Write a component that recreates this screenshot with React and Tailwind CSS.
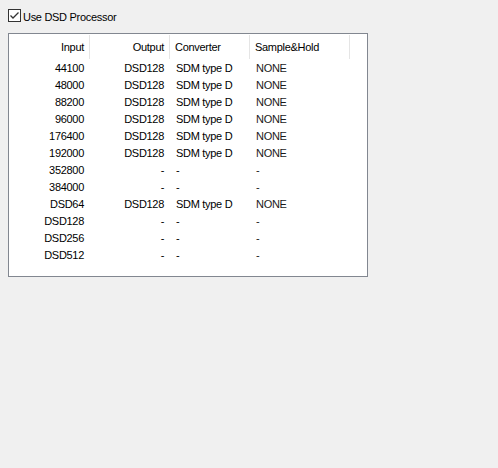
const rows = [
  ["44100", "DSD128", "SDM type D", "NONE"],
  ["48000", "DSD128", "SDM type D", "NONE"],
  ["88200", "DSD128", "SDM type D", "NONE"],
  ["96000", "DSD128", "SDM type D", "NONE"],
  ["176400", "DSD128", "SDM type D", "NONE"],
  ["192000", "DSD128", "SDM type D", "NONE"],
  ["352800", "-", "-", "-"],
  ["384000", "-", "-", "-"],
  ["DSD64", "DSD128", "SDM type D", "NONE"],
  ["DSD128", "-", "-", "-"],
  ["DSD256", "-", "-", "-"],
  ["DSD512", "-", "-", "-"],
];

const App = () => {
  return (
    <div className="h-[468px] w-[498px] bg-[#f0f0f0] text-[11px] tracking-[-0.3px] text-black" style={{ fontFamily: '"Liberation Sans", Arial, sans-serif' }}>
      <label className="flex h-[22px] items-end pl-2">
        <span className="flex h-[13px] w-[13px] items-center justify-center border border-[#333] bg-white">
          <svg width="11" height="11" viewBox="0 0 11 11">
            <path d="M1.5 5.5 L4 8 L9.5 2.5" fill="none" stroke="#333" strokeWidth="1.3" />
          </svg>
        </span>
        <span className="ml-[2px] h-[13px] pt-[2px] leading-[13px]">Use DSD Processor</span>
      </label>
      <div className="ml-2 mt-[11px] h-[244px] w-[360px] border border-[#828790] bg-white">
        <div className="flex h-[25px] items-center">
          <div className="flex h-[24px] w-[81px] items-center justify-end border-r border-[#e5e5e5] pr-[5px] pt-[2px]">Input</div>
          <div className="flex h-[24px] w-[80px] items-center justify-end border-r border-[#e5e5e5] pr-[5px] pt-[2px]">Output</div>
          <div className="flex h-[24px] w-[80px] items-center border-r border-[#e5e5e5] pl-[5px] pt-[2px]">Converter</div>
          <div className="flex h-[24px] w-[100px] items-center border-r border-[#e5e5e5] pl-[5px] pt-[2px]">Sample&amp;Hold</div>
        </div>
        <div className="pt-[1px]">
          {rows.map((row) => (
            <div key={row[0]} className="flex h-[17px] items-center">
              <div className="w-[81px] pr-[6px] text-right">{row[0]}</div>
              <div className="w-[80px] pr-[6px] text-right">{row[1]}</div>
              <div className="w-[80px] pl-[6px]">{row[2]}</div>
              <div className="w-[100px] pl-[6px] text-[#1a1a1a]">{row[3]}</div>
            </div>
          ))}
        </div>
      </div>
    </div>
  );
};

export default App;
